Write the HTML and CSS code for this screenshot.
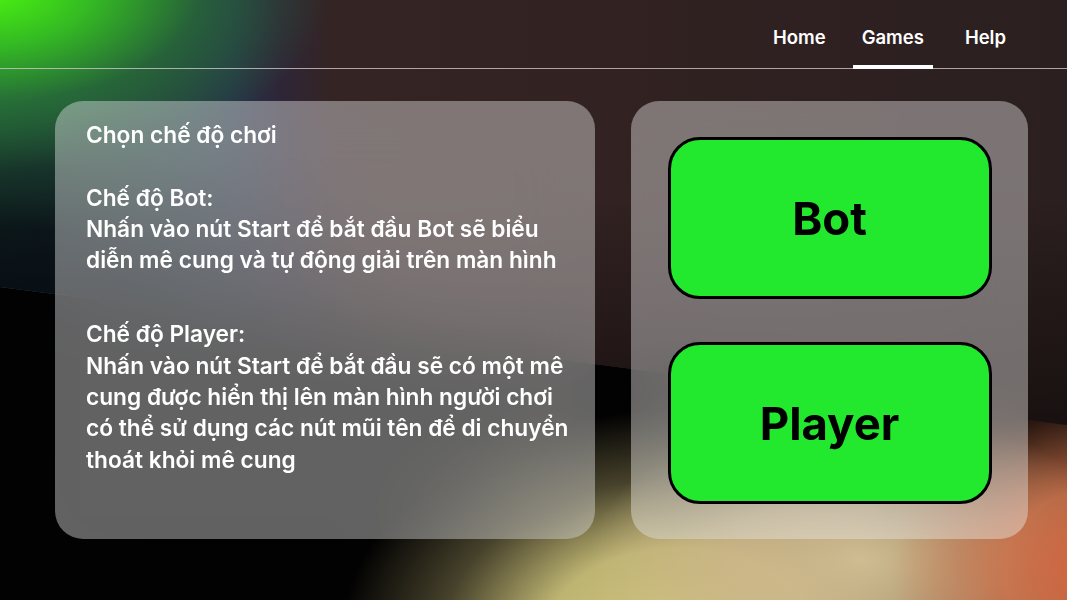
FILE: index.html
```html
<!DOCTYPE html>
<html lang="vi">
<head>
<meta charset="utf-8">
<title>Games</title>
<link rel="stylesheet" href="styles.css">
</head>
<body>
<div class="backdrop"></div>
<div class="page">
  <header class="topbar">
    <nav class="nav">
      <a class="nav-link" href="#">Home</a>
      <a class="nav-link active" href="#">Games</a>
      <a class="nav-link" href="#">Help</a>
    </nav>
  </header>
  <main class="main">
    <section class="card info">
      <p class="para">Chọn chế độ chơi</p>
      <p class="para">Chế độ Bot:<br>Nhấn vào nút Start để bắt đầu Bot sẽ biểu diễn mê cung và tự động giải trên màn hình</p>
      <p class="para gap">Chế độ Player:<br>Nhấn vào nút Start để bắt đầu sẽ có một mê cung được hiển thị lên màn hình người chơi có thể sử dụng các nút mũi tên để di chuyển thoát khỏi mê cung</p>
    </section>
    <section class="card modes">
      <button class="mode-btn">Bot</button>
      <button class="mode-btn">Player</button>
    </section>
  </main>
</div>
</body>
</html>
```

FILE: styles.css
```css
* { box-sizing: border-box; }
html, body { margin: 0; padding: 0; }
body {
  width: 1067px;
  height: 600px;
  overflow: hidden;
  position: relative;
  font-family: "Inter", "Noto Sans", sans-serif;
  background-color: #020202;
  background-image:
    radial-gradient(ellipse 210px 180px at 1100px 570px, rgba(212, 100, 62, 1) 0%, rgba(210, 118, 78, 0.85) 45%, rgba(205, 135, 95, 0) 100%),
    radial-gradient(ellipse 270px 150px at 860px 560px, rgba(208, 188, 145, 1) 0%, rgba(205, 182, 140, 0.75) 50%, rgba(200, 175, 130, 0) 100%),
    radial-gradient(ellipse 340px 230px at 680px 640px, rgba(210, 198, 125, 1) 0%, rgba(200, 190, 120, 0.95) 40%, rgba(140, 130, 85, 0.5) 70%, rgba(40, 38, 28, 0) 100%);
}
/* upper dark band of the wallpaper, with the green glow */
.backdrop {
  position: absolute;
  inset: 0;
  clip-path: polygon(0 0, 100% 0, 100% 425px, 60% 370px, 0 287px);
  background-color: #2b1f1f;
  background-image:
    radial-gradient(ellipse 340px 180px at -10px -10px, rgba(75, 245, 15, 1) 0%, rgba(55, 205, 30, 0.85) 30%, rgba(40, 130, 50, 0.5) 62%, rgba(30, 70, 70, 0) 100%),
    radial-gradient(ellipse 420px 230px at 0px 330px, rgba(6, 8, 18, 0.95) 0%, rgba(6, 8, 18, 0.8) 45%, rgba(8, 10, 20, 0) 100%),
    linear-gradient(180deg, rgba(20, 12, 12, 0) 0px, rgba(20, 12, 12, 0) 200px, rgba(14, 8, 8, 0.65) 430px),
    linear-gradient(90deg, #245a3c 0px, #254040 170px, #263648 230px, #2e2638 280px, #342424 330px, #322222 600px, #2b1f1f 1067px);
}
.page {
  position: relative;
  display: flex;
  flex-direction: column;
  height: 600px;
}
.topbar {
  height: 69px;
  border-bottom: 1px solid rgba(205, 200, 200, 0.8);
  display: flex;
  justify-content: flex-end;
  padding-right: 52px;
}
.nav { display: flex; align-items: stretch; }
.nav-link {
  color: #ffffff;
  text-decoration: none;
  font-size: 18.5px;
  font-weight: 600;
  padding: 26px 9px 0;
  position: relative;
}
.nav-link + .nav-link { margin-left: 18px; }
.nav-link:last-child { margin-left: 23px; }
.nav-link.active::after {
  content: "";
  position: absolute;
  left: 0; right: 0; bottom: -1px;
  height: 4px;
  background: #ffffff;
}
.main {
  display: flex;
  gap: 36px;
  padding: 32px 0 0 55px;
}
.card {
  height: 438px;
  border-radius: 28px;
  background: rgba(255, 255, 255, 0.38);
  backdrop-filter: blur(36px);
}
.info {
  width: 540px;
  padding: 18px 12px 0 31px;
  color: #ffffff;
  font-size: 22.7px;
  font-weight: 600;
  line-height: 31.3px;
}
.para { margin: 0 0 31.3px; }
.para.gap { margin-top: 43px; }
.modes {
  width: 397px;
  display: flex;
  flex-direction: column;
  align-items: center;
  justify-content: space-between;
  padding: 36px 0 35px;
}
.mode-btn {
  width: 324px;
  height: 162px;
  background: #22e82e;
  border: 3px solid #000000;
  border-radius: 32px;
  font-family: "Inter", "Noto Sans", sans-serif;
  font-size: 45.5px;
  font-weight: 700;
  color: #000000;
  padding: 0;
  cursor: pointer;
}
```
